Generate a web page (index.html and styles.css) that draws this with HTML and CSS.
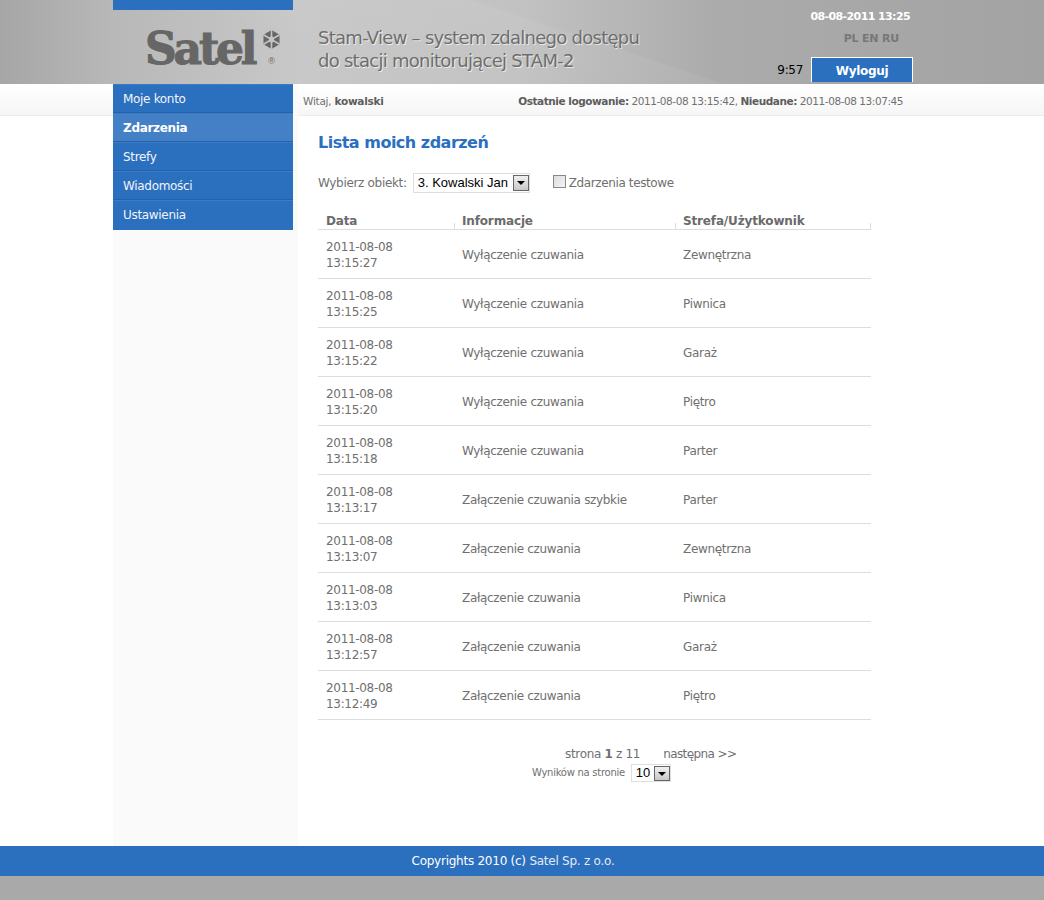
FILE: index.html
```html
<!DOCTYPE html>
<html lang="pl">
<head>
<meta charset="utf-8">
<title>Stam-View</title>
<link rel="stylesheet" href="styles.css">
</head>
<body>
<header class="header">
  <div class="wrap header-in">
    <div class="brand">
      <div class="stripe"></div>
      <div class="logo">
        <span class="logo-text">Satel</span>
        <div class="logo-marks">
          <svg class="logo-flake" width="19" height="22" viewBox="0 0 19 22">
            <path d="M9.5 1 17.5 5.7V15.3L9.5 20 1.5 15.3V5.7Z" fill="#666"/>
            <path d="M9.5 1V20M1.5 5.7 17.5 15.3M17.5 5.7 1.5 15.3" stroke="#c4c4c4" stroke-width="1.6"/>
            <path d="M9.5 7 12 8.5V12.5L9.5 14 7 12.5V8.5Z" fill="#c4c4c4"/>
          </svg>
          <span class="logo-r">®</span>
        </div>
      </div>
    </div>
    <div class="title">Stam-View – system zdalnego dostępu<br>do stacji monitorującej STAM-2</div>
    <div class="top-right">
      <div class="clock">08-08-2011 13:25</div>
      <div class="langs">PL EN RU</div>
      <div class="session">
        <span class="timer">9:57</span>
        <a class="logout">Wyloguj</a>
      </div>
    </div>
  </div>
</header>

<div class="wrap main">
  <nav class="side">
    <ul class="menu">
      <li class="menu-item">Moje konto</li>
      <li class="menu-item active">Zdarzenia</li>
      <li class="menu-item">Strefy</li>
      <li class="menu-item">Wiadomości</li>
      <li class="menu-item">Ustawienia</li>
    </ul>
  </nav>
  <div class="col">
    <div class="info">
      <div class="hello">Witaj, <b>kowalski</b></div>
      <div class="logins"><b>Ostatnie logowanie:</b> 2011-08-08 13:15:42, <b>Nieudane:</b> 2011-08-08 13:07:45</div>
    </div>
    <main class="content">
      <h1 class="heading">Lista moich zdarzeń</h1>
      <div class="filters">
        <span>Wybierz obiekt:</span>
        <span class="select sel-object"><span class="sel-val">3. Kowalski Jan</span><span class="sel-btn"></span></span>
        <span class="check"></span>
        <span class="check-label">Zdarzenia testowe</span>
      </div>
      <table class="grid">
        <thead>
          <tr><th class="c1">Data</th><th class="c2">Informacje</th><th class="c3">Strefa/Użytkownik</th></tr>
        </thead>
        <tbody>
          <tr><td>2011-08-08<br>13:15:27</td><td>Wyłączenie czuwania</td><td>Zewnętrzna</td></tr>
          <tr><td>2011-08-08<br>13:15:25</td><td>Wyłączenie czuwania</td><td>Piwnica</td></tr>
          <tr><td>2011-08-08<br>13:15:22</td><td>Wyłączenie czuwania</td><td>Garaż</td></tr>
          <tr><td>2011-08-08<br>13:15:20</td><td>Wyłączenie czuwania</td><td>Piętro</td></tr>
          <tr><td>2011-08-08<br>13:15:18</td><td>Wyłączenie czuwania</td><td>Parter</td></tr>
          <tr><td>2011-08-08<br>13:13:17</td><td>Załączenie czuwania szybkie</td><td>Parter</td></tr>
          <tr><td>2011-08-08<br>13:13:07</td><td>Załączenie czuwania</td><td>Zewnętrzna</td></tr>
          <tr><td>2011-08-08<br>13:13:03</td><td>Załączenie czuwania</td><td>Piwnica</td></tr>
          <tr><td>2011-08-08<br>13:12:57</td><td>Załączenie czuwania</td><td>Garaż</td></tr>
          <tr><td>2011-08-08<br>13:12:49</td><td>Załączenie czuwania</td><td>Piętro</td></tr>
        </tbody>
      </table>
      <div class="pager">
        <div class="pages"><span>strona <b>1</b> z 11</span><span class="next">następna &gt;&gt;</span></div>
        <div class="per-page"><span>Wyników na stronie</span><span class="select sel-size"><span class="sel-val">10</span><span class="sel-btn"></span></span></div>
      </div>
    </main>
  </div>
</div>

<footer class="footer">Copyrights 2010 (c) <span class="foot-co">Satel Sp. z o.o.</span></footer>
<div class="bottom"></div>
</body>
</html>
```

FILE: styles.css
```css
* { box-sizing: border-box; }
html, body { margin: 0; padding: 0; }
body {
  height: 900px;
  overflow: hidden;
  background: #fff;
  color: #707070;
  font: 12px/16px "DejaVu Sans", Verdana, sans-serif;
  display: flex;
  flex-direction: column;
  letter-spacing: -0.32px;
}
.wrap { width: 818px; margin: 0 auto; }

.header {
  height: 84px;
  background:
    linear-gradient(18.5deg, rgba(255,255,255,0) 30%, rgba(255,255,255,.05) 55.6%, rgba(255,255,255,0) 56%),
    linear-gradient(90deg, #a6a6a6 0, #b8b8b8 113px, #c8c8c8 300px, #c2c2c2 520px, #ababab 720px, #a3a3a3 1044px);
}
.header-in { display: flex; height: 84px; }
.brand { width: 180px; flex: none; }
.stripe { height: 10px; background: #2b6fbf; }
.logo {
  display: flex;
  margin: 19px 0 0 32px;
  height: 40px;
}
.logo-text {
  font: 900 44px/40px "DejaVu Serif", serif;
  letter-spacing: -3.2px;
  color: #666;
  width: 117px;
  flex: none;
  white-space: nowrap;
  -webkit-text-stroke: 1px #666;
}
.logo-marks { display: flex; flex-direction: column; align-items: center; }
.logo-flake { margin-top: 0; }
.logo-r { font: 9px/10px "Liberation Sans", sans-serif; color: #666; margin: 5px 0 0 0; letter-spacing: 0; }

.title {
  width: 459px;
  flex: none;
  padding: 26px 0 0 25px;
  font: 18px/23px "DejaVu Sans", sans-serif;
  letter-spacing: -0.73px;
  color: #6e6e6e;
  text-shadow: 1px 1px 0 rgba(255,255,255,.65);
  white-space: nowrap;
}
.top-right { flex: 1; display: flex; flex-direction: column; align-items: flex-end; padding-right: 21px; }
.clock { color: #fff; font-weight: bold; font-size: 11px; line-height: 14px; margin-top: 10px; letter-spacing: -0.6px; }
.langs { color: #777; font-weight: bold; font-size: 11px; line-height: 14px; margin-top: 8px; margin-right: 11px; letter-spacing: -0.2px; }
.session { display: flex; align-items: flex-end; margin-top: 11px; margin-right: -3px; height: 25px; }
.timer { color: #000; font-size: 12px; line-height: 16px; margin-right: 8px; margin-bottom: 4px; }
.logout {
  width: 102px;
  height: 25px;
  background: #2b6fbf;
  border: 1px solid #fff;
  border-bottom: 0;
  color: #fff;
  font-weight: bold;
  text-align: center;
  line-height: 27px;
}

.main { display: flex; flex: 1; min-height: 0; }
.side {
  width: 185px;
  flex: none;
  background: #fafafa;
}
.menu { list-style: none; margin: 0; padding: 0; width: 180px; }
.menu-item {
  height: 29px;
  padding-left: 10px;
  background: #2b6fbf;
  border-bottom: 1px solid #2560a8;
  box-shadow: inset 0 1px 0 #3b7cc8;
  color: #f2f4f8;
  line-height: 30px;
}
.menu-item:last-child { height: 30px; border-bottom: 0; }
.menu-item.active {
  background: #4480c6;
  color: #fff;
  font-weight: bold;
}
.col { flex: 1; display: flex; flex-direction: column; }
.info {
  position: relative;
  height: 32px;
  display: flex;
  justify-content: space-between;
  font-size: 10.5px;
  line-height: 34px;
  letter-spacing: -0.44px;
  padding: 0 28px 0 5px;
  margin-left: -5px;
}
.info::before {
  content: "";
  position: absolute;
  z-index: -1;
  top: 0;
  bottom: 0;
  left: -293px;
  width: 1044px;
  background: linear-gradient(#fff, #f6f6f6);
  border-bottom: 1px solid #ececec;
}
.hello { padding-left: 5px; line-height: 35px; letter-spacing: -0.25px; }
.hello b, .logins b { color: #5d5d5d; }

.content { padding: 0 0 0 20px; }
.heading {
  margin: 17px 0 0;
  font: bold 16px/20px "DejaVu Sans", sans-serif;
  letter-spacing: -0.5px;
  color: #2b6fbf;
}
.filters { display: flex; align-items: center; margin-top: 20px; height: 20px; }
.select {
  display: inline-flex;
  flex: none;
  align-items: center;
  justify-content: space-between;
  height: 20px;
  padding: 0 0 0 4px;
  background: #fff;
  border: 1px solid #dedede;
  color: #000;
  font: 13px/16px "Liberation Sans", Arial, sans-serif;
  letter-spacing: 0;
}
.sel-object { width: 117px; margin-left: 6px; }
.sel-btn {
  width: 16px;
  height: 16px;
  flex: none;
  position: relative;
  border: 1px solid #666;
  background: linear-gradient(#f0f0f0, #c8c8c8);
}
.sel-btn::after {
  content: "";
  position: absolute;
  left: 3px;
  top: 5px;
  border: 4px solid transparent;
  border-top: 4px solid #000;
  border-bottom: 0;
}
.check {
  width: 13px;
  height: 13px;
  flex: none;
  margin: -3px 3px 0 23px;
  border: 1px solid #888;
  background: linear-gradient(135deg, #dcdcdc, #f4f4f4);
}
.check-label { letter-spacing: -0.38px; }

.grid { border-collapse: collapse; width: 553px; margin-top: 17px; table-layout: fixed; }
.grid th {
  position: relative;
  height: 19px;
  padding: 3px 0 0 8px;
  text-align: left;
  font-size: 12px;
  line-height: 16px;
  letter-spacing: -0.15px;
  color: #6b6b6b;
  border-bottom: 1px solid #ddd;
}
.grid th + th::before, .grid .c3::after {
  content: "";
  position: absolute;
  left: 0;
  bottom: 0;
  height: 6px;
  border-left: 1px solid #ddd;
}
.grid .c3::after { left: auto; right: 0; }
.c1 { width: 136px; }
.c2 { width: 221px; }
.grid td {
  height: 49px;
  padding: 2px 0 0 8px;
  border-bottom: 1px solid #ddd;
  vertical-align: middle;
}

.pager { width: 553px; margin-top: 26px; display: flex; flex-direction: column; }
.pages { display: flex; padding-left: 247px; height: 16px; }
.next { margin-left: 23px; letter-spacing: -0.6px; }
.per-page {
  display: flex;
  align-items: center;
  padding-left: 214px;
  margin-top: 2px;
  font-size: 10px;
  letter-spacing: -0.27px;
}
.sel-size { width: 40px; height: 18px; margin-left: 6px; }
.sel-size .sel-btn { height: 15px; }

.footer {
  height: 30px;
  flex: none;
  background: #2b6fbf;
  color: #fff;
  text-align: center;
  line-height: 31px;
  padding-right: 18px;
  letter-spacing: -0.25px;
}
.foot-co { color: #e4e9f2; }
.bottom { height: 24px; flex: none; background: #a9a9a9; }
```
